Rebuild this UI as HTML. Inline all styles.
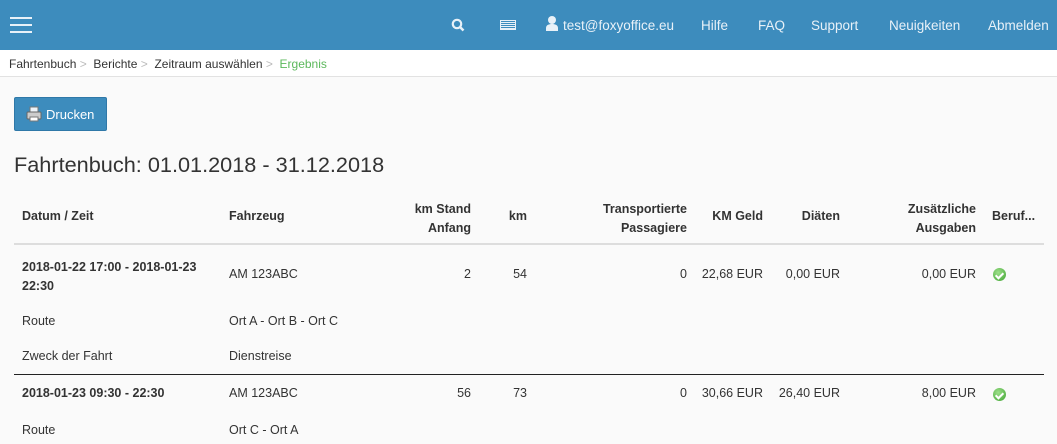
<!DOCTYPE html><html><head><meta charset="utf-8"><style>
*{margin:0;padding:0;box-sizing:border-box}
body{width:1057px;height:444px;overflow:hidden;background:#fafafa;font-family:"Liberation Sans",sans-serif;font-size:12.5px;color:#333;position:relative}
.a{position:absolute;white-space:nowrap}
.hd{position:absolute;left:0;top:0;width:1057px;height:50px;background:#3d8cbd}
.hd .a{color:#e8f1f8;font-size:13.5px;top:18px}
.bc{position:absolute;top:50px;left:0;width:1057px;height:27px;background:#fff;border-bottom:1px solid #e2e2e2}
.bc .a{top:7px;font-size:12px}
.g{color:#bbb}
.b{font-weight:bold}
.r{text-align:right}
.ok{position:absolute;width:13px;height:13px;border-radius:50%;background:radial-gradient(circle at 40% 35%,#9de08a,#3fa331);}
.ok:after{content:"";position:absolute;left:4px;top:2.5px;width:3px;height:6px;border:solid #fff;border-width:0 2px 2px 0;transform:rotate(45deg)}
</style></head><body>
<div class="hd">
<div style="position:absolute;left:10px;top:17px;width:22px;height:2px;background:#e8f1f8;box-shadow:0 7px 0 #e8f1f8,0 14px 0 #e8f1f8"></div>
<svg class="a" style="left:451px;top:18px" width="14" height="14" viewBox="0 0 14 14"><circle cx="6" cy="6" r="4.2" fill="none" stroke="#e8f1f8" stroke-width="2.2"/><path d="M9 9l3.5 3.5" stroke="#e8f1f8" stroke-width="2.5"/></svg>
<div class="a" style="left:500px;top:20px;width:16px;height:10px;border:1px solid #e8f1f8;background:repeating-linear-gradient(#3d8cbd 0 1px,#e8f1f8 1px 2px)"></div>
<svg class="a" style="left:545px;top:15px" width="14" height="16" viewBox="0 0 14 16"><circle cx="7" cy="5" r="4" fill="#e8f1f8"/><path d="M1 16v-3c0-3 3-4 6-4s6 1 6 4v3z" fill="#e8f1f8"/></svg>
<div class="a" style="left:563px">test@foxyoffice.eu</div>
<div class="a" style="left:701px">Hilfe</div>
<div class="a" style="left:758px">FAQ</div>
<div class="a" style="left:811px">Support</div>
<div class="a" style="left:889px">Neuigkeiten</div>
<div class="a" style="left:988px">Abmelden</div>
</div>
<div class="bc">
<div class="a" style="left:9px">Fahrtenbuch <span class="g">&gt;</span>&nbsp; Berichte <span class="g">&gt;</span>&nbsp; Zeitraum auswählen <span class="g">&gt;</span>&nbsp; <span style="color:#5cb85c">Ergebnis</span></div>
</div>
<div class="a" style="left:14px;top:97px;width:93px;height:34px;background:#3d8cbd;border:1px solid #2f78a8;border-radius:2px;color:#fff;font-size:13px;padding:9px 0 0 31px">Drucken</div>
<svg class="a" style="left:26px;top:106px" width="16" height="16" viewBox="0 0 16 16"><rect x="4" y="1" width="8" height="6" fill="#eef4fa" stroke="#777"/><rect x="1" y="6" width="14" height="7" rx="1" fill="#ccc" stroke="#666"/><rect x="4" y="11" width="8" height="4" fill="#fff" stroke="#777"/></svg>
<div class="a" style="left:14px;top:152px;font-size:21.7px;color:#333">Fahrtenbuch: 01.01.2018 - 31.12.2018</div>
<div class="a b" style="left:22px;top:209px">Datum / Zeit</div>
<div class="a b" style="left:229px;top:209px">Fahrzeug</div>
<div class="a b r" style="right:586px;top:200px;line-height:19px">km Stand<br>Anfang</div>
<div class="a b r" style="right:530px;top:209px">km</div>
<div class="a b r" style="right:370px;top:200px;line-height:19px">Transportierte<br>Passagiere</div>
<div class="a b r" style="right:294px;top:209px">KM Geld</div>
<div class="a b r" style="right:217px;top:209px">Diäten</div>
<div class="a b r" style="right:81px;top:200px;line-height:19px">Zusätzliche<br>Ausgaben</div>
<div class="a b" style="left:992px;top:209px">Beruf...</div>
<div class="a" style="left:14px;top:243px;width:1030px;height:2px;background:#ddd"></div>
<div class="a b" style="left:22px;top:258px;line-height:19px">2018-01-22 17:00 - 2018-01-23<br>22:30</div>
<div class="a" style="left:229px;top:267px">AM 123ABC</div>
<div class="a r" style="right:586px;top:267px">2</div>
<div class="a r" style="right:530px;top:267px">54</div>
<div class="a r" style="right:370px;top:267px">0</div>
<div class="a r" style="right:294px;top:267px">22,68 EUR</div>
<div class="a r" style="right:217px;top:267px">0,00 EUR</div>
<div class="a r" style="right:81px;top:267px">0,00 EUR</div>
<div class="ok" style="left:993px;top:268px"></div>
<div class="a" style="left:22px;top:314px">Route</div>
<div class="a" style="left:229px;top:314px">Ort A - Ort B - Ort C</div>
<div class="a" style="left:22px;top:349px">Zweck der Fahrt</div>
<div class="a" style="left:229px;top:349px">Dienstreise</div>
<div class="a" style="left:14px;top:374px;width:1030px;height:1px;background:#222"></div>
<div class="a b" style="left:22px;top:386px">2018-01-23 09:30 - 22:30</div>
<div class="a" style="left:229px;top:386px">AM 123ABC</div>
<div class="a r" style="right:586px;top:386px">56</div>
<div class="a r" style="right:530px;top:386px">73</div>
<div class="a r" style="right:370px;top:386px">0</div>
<div class="a r" style="right:294px;top:386px">30,66 EUR</div>
<div class="a r" style="right:217px;top:386px">26,40 EUR</div>
<div class="a r" style="right:81px;top:386px">8,00 EUR</div>
<div class="ok" style="left:993px;top:388px"></div>
<div class="a" style="left:22px;top:423px">Route</div>
<div class="a" style="left:229px;top:423px">Ort C - Ort A</div>
</body></html>
